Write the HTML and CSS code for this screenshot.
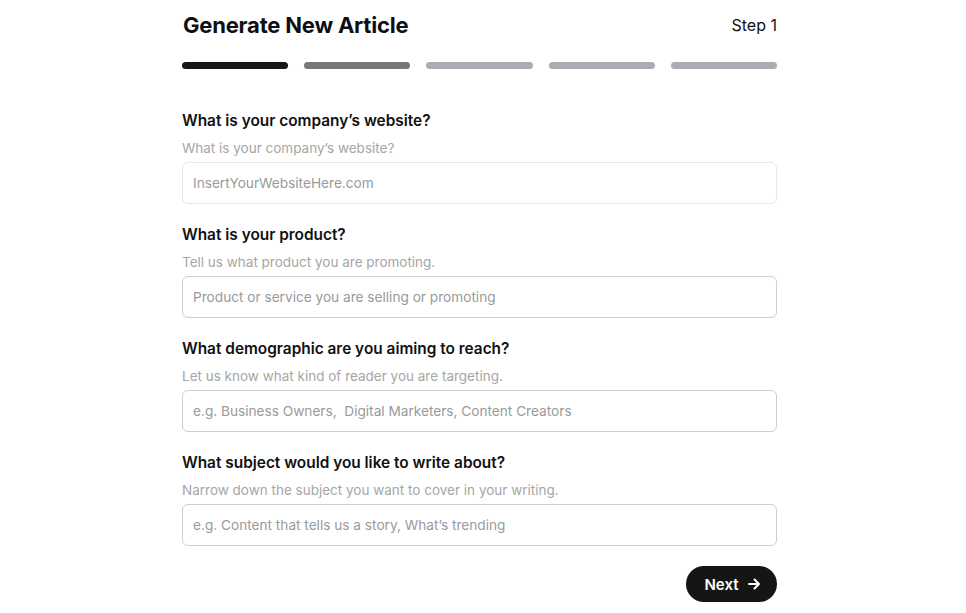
FILE: index.html
```html
<!DOCTYPE html>
<html lang="en">
<head>
<meta charset="utf-8">
<title>Generate New Article</title>
<link rel="stylesheet" href="styles.css">
</head>
<body>
<main class="wrap">
  <header class="head">
    <h1 class="title">Generate New Article</h1>
    <span class="step">Step 1</span>
  </header>
  <div class="progress">
    <span class="bar bar-done"></span>
    <span class="bar bar-next"></span>
    <span class="bar"></span>
    <span class="bar"></span>
    <span class="bar"></span>
  </div>
  <form class="form">
    <div class="field">
      <label class="label">What is your company’s website?</label>
      <p class="desc">What is your company’s website?</p>
      <input class="input input-light" type="text" placeholder="InsertYourWebsiteHere.com">
    </div>
    <div class="field">
      <label class="label">What is your product?</label>
      <p class="desc">Tell us what product you are promoting.</p>
      <input class="input" type="text" placeholder="Product or service you are selling or promoting">
    </div>
    <div class="field">
      <label class="label">What demographic are you aiming to reach?</label>
      <p class="desc">Let us know what kind of reader you are targeting.</p>
      <input class="input" type="text" placeholder="e.g. Business Owners,  Digital Marketers, Content Creators">
    </div>
    <div class="field">
      <label class="label">What subject would you like to write about?</label>
      <p class="desc">Narrow down the subject you want to cover in your writing.</p>
      <input class="input" type="text" placeholder="e.g. Content that tells us a story, What’s trending">
    </div>
    <div class="actions">
      <button class="btn" type="button">Next
        <svg class="arrow" width="14" height="14" viewBox="0 0 14 14" fill="none" stroke="#fff" stroke-width="2" stroke-linecap="round" stroke-linejoin="round"><path d="M2 7h10M7.5 2.5 12 7l-4.5 4.5"/></svg>
      </button>
    </div>
  </form>
</main>
</body>
</html>
```
FILE: styles.css
```css
* { box-sizing: border-box; }
html, body { margin: 0; padding: 0; background: #fff; }
body {
  font-family: Inter, "Noto Sans", "Liberation Sans", sans-serif;
  color: #111;
}
.wrap {
  width: 595px;
  margin-left: calc(50% - 301px);
  padding-top: 10px;
}
.head {
  display: flex;
  justify-content: space-between;
  align-items: center;
  height: 30px;
}
.title {
  margin: 0 0 0 1px;
  font-size: 22px;
  line-height: 30px;
  font-weight: 700;
  color: #0d0f14;
  letter-spacing: -0.2px;
}
.step {
  font-size: 16px;
  line-height: 30px;
  color: #111;
}
.progress {
  display: flex;
  gap: 16px;
  margin-top: 22px;
}
.bar {
  flex: 1;
  height: 7px;
  border-radius: 4px;
  background: #a9adb1;
}
.bar-done { background: #161616; }
.bar-next { background: #777; }
.form {
  margin-top: 40px;
  display: flex;
  flex-direction: column;
}
.field {
  display: flex;
  flex-direction: column;
  margin-bottom: 19px;
}
.label {
  font-size: 15.4px;
  line-height: 24px;
  font-weight: 600;
  color: #111;
}
.desc {
  margin: 5px 0 4px;
  font-size: 13.5px;
  line-height: 20px;
  color: #a6a6a6;
}
.input {
  height: 42px;
  width: 100%;
  border: 1px solid #cfcfcf;
  border-radius: 6px;
  padding: 0 10px;
  font-family: inherit;
  font-size: 13.65px;
  color: #333;
  background: #fff;
  outline: none;
}
.input-light { border-color: #e6e6e6; }
.input::placeholder { color: #9a9a9a; }
.actions {
  display: flex;
  justify-content: flex-end;
  margin-top: 1px;
}
.btn {
  height: 36px;
  width: 91px;
  border: none;
  border-radius: 18px;
  background: #151515;
  color: #fff;
  font-family: inherit;
  font-size: 15px;
  font-weight: 600;
  display: flex;
  align-items: center;
  justify-content: center;
  gap: 8px;
  padding: 0 0 0 2px;
}
.arrow { display: block; }
```
